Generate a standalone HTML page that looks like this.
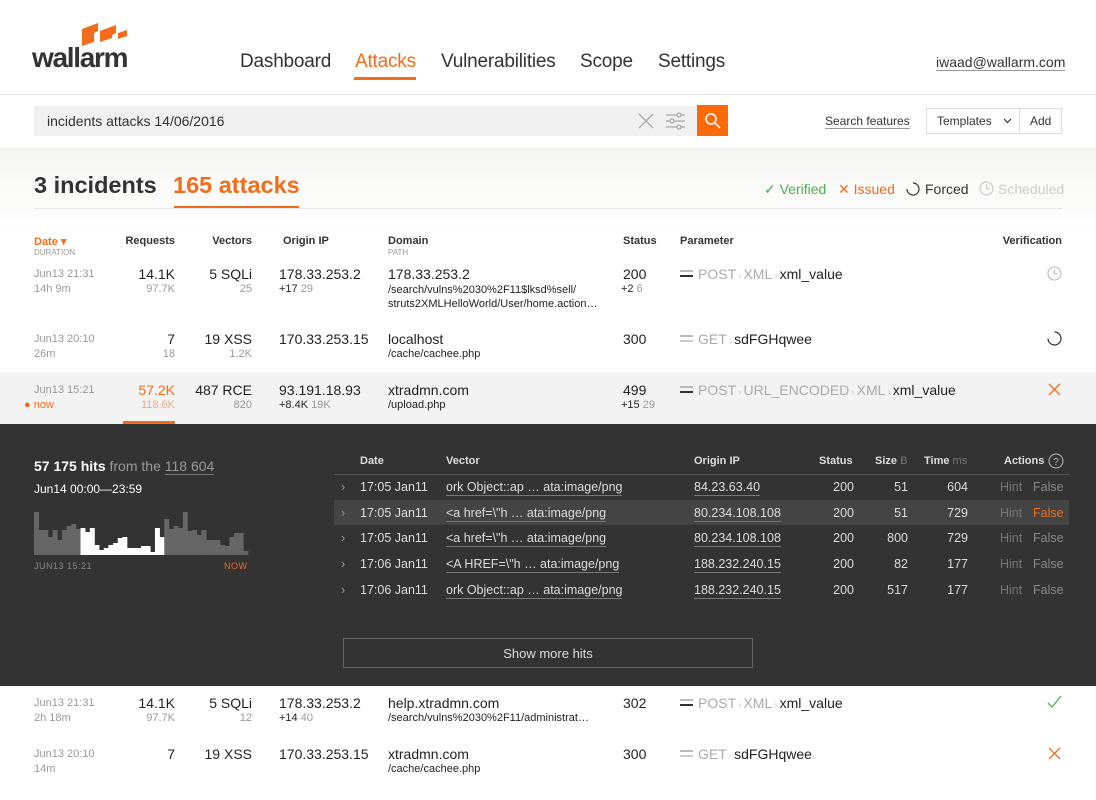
<!DOCTYPE html>
<html><head><meta charset="utf-8"><style>
*{margin:0;padding:0;box-sizing:border-box}
body{width:1096px;height:800px;overflow:hidden;background:#fff;font-family:"Liberation Sans",sans-serif;color:#222;position:relative}
.a{position:absolute;white-space:nowrap}
.r{text-align:right}
.g{color:#999}
.s{font-size:11px}
.m{font-size:14px}
.h{font-size:11px;font-weight:bold;color:#333}
.nav{font-size:19px;color:#333;top:51px;letter-spacing:-0.2px}
.dh{font-size:11px;font-weight:bold;color:#ddd;top:455px}
.dr{font-size:12.5px;color:#ddd}
.u{border-bottom:1px solid #777;padding-bottom:1px}
.pi{display:inline-block;width:13px;height:7px;border-top:2px solid #bbb;border-bottom:2px solid #333;margin-right:5px;vertical-align:2px}
.sep{color:#ccc;font-size:10px;margin:0 2px}
</style></head><body>
<!-- header -->
<svg class="a" style="left:80px;top:22px" width="50" height="25" viewBox="0 0 50 25">
<polygon points="2,7 18,1 18,9 14,11 14,20 2,24" fill="#f26c1b"/>
<polygon points="20,9 36,3 36,11 32,13 32,16 20,20" fill="#f26c1b"/>
<polygon points="38,11 47,8 47,14 38,17" fill="#f26c1b"/>
</svg>
<div class="a" style="left:32px;top:42px;font-size:28px;font-weight:bold;color:#333;letter-spacing:-1.3px">wallarm</div>
<div class="a nav" style="left:240px">Dashboard</div>
<div class="a nav" style="left:355px;color:#f26c1b">Attacks</div>
<div class="a" style="left:354px;top:77px;width:62px;height:3px;background:#f26c1b"></div>
<div class="a nav" style="left:441px">Vulnerabilities</div>
<div class="a nav" style="left:580px">Scope</div>
<div class="a nav" style="left:658px">Settings</div>
<div class="a" style="left:936px;top:54px;font-size:14px;color:#333;border-bottom:1px solid #999">iwaad@wallarm.com</div>
<div class="a" style="left:0;top:94px;width:1096px;height:1px;background:#e6e6e6"></div>
<!-- search -->
<div class="a" style="left:0;top:147px;width:1096px;height:277px;background:linear-gradient(#f6f6f5,#fff 90px)"></div>
<div class="a" style="left:34px;top:106px;width:663px;height:30px;background:#f0f0f0"></div>
<div class="a" style="left:47px;top:113px;font-size:14px;color:#333">incidents attacks 14/06/2016</div>
<svg class="a" style="left:638px;top:113px" width="16" height="16"><path d="M1 1L15 15M15 1L1 15" stroke="#aaa" stroke-width="1.3"/></svg>
<svg class="a" style="left:665px;top:111px" width="20" height="20"><g stroke="#aaa" stroke-width="1.3" fill="none"><path d="M1 4H20M1 10H20M1 16H20"/><circle cx="14" cy="4" r="2" fill="#f0f0f0"/><circle cx="7" cy="10" r="2" fill="#f0f0f0"/><circle cx="14" cy="16" r="2" fill="#f0f0f0"/></g></svg>
<div class="a" style="left:697px;top:105px;width:31px;height:31px;background:#fb6a0a"></div>
<svg class="a" style="left:704px;top:112px" width="17" height="17"><circle cx="7" cy="7" r="5" stroke="#fff" stroke-width="1.6" fill="none"/><path d="M11 11L16 16" stroke="#fff" stroke-width="1.6"/></svg>
<div class="a" style="left:825px;top:114px;font-size:12px;color:#333;border-bottom:1px solid #999">Search features</div>
<div class="a" style="left:926px;top:108px;width:136px;height:26px;border:1px solid #ddd;background:#fff"></div>
<div class="a" style="left:1019px;top:108px;width:1px;height:26px;background:#ddd"></div>
<div class="a" style="left:937px;top:114px;font-size:12px;color:#333">Templates</div>
<svg class="a" style="left:1003px;top:118px" width="9" height="6"><path d="M1 1L4.5 4.5L8 1" stroke="#333" fill="none" stroke-width="1.2"/></svg>
<div class="a" style="left:1030px;top:114px;font-size:12px;color:#333">Add</div>
<!-- title -->
<div class="a" style="left:34px;top:172px;font-size:23.5px;font-weight:bold;color:#333">3 incidents</div>
<div class="a" style="left:173px;top:172px;font-size:23.5px;font-weight:bold;color:#f26c1b">165 attacks</div>
<div class="a" style="left:174px;top:206px;width:125px;height:2px;background:#f26c1b"></div>
<div class="a" style="left:34px;top:208px;width:1028px;height:1px;background:#e8e8e8"></div>
<div class="a" style="left:764px;top:181px;font-size:14px;color:#4caf50">✓ Verified</div>
<div class="a" style="left:838px;top:181px;font-size:14px;color:#f26c1b">✕ Issued</div>
<svg class="a" style="left:906px;top:182px" width="14" height="14"><path d="M7 1A6 6 0 1 1 1 7" stroke="#333" fill="none" stroke-width="1.2"/></svg>
<div class="a" style="left:925px;top:181px;font-size:14px;color:#333">Forced</div>
<svg class="a" style="left:979px;top:181px" width="15" height="15"><circle cx="7.5" cy="7.5" r="6.5" stroke="#ccc" fill="none" stroke-width="1.2"/><path d="M7.5 3.5V7.5H10.5" stroke="#ccc" fill="none" stroke-width="1.2"/></svg>
<div class="a" style="left:998px;top:181px;font-size:14px;color:#ccc">Scheduled</div>
<!-- column headers -->
<div class="a h" style="left:34px;top:235px;color:#f26c1b">Date ▾</div>
<div class="a g" style="left:34px;top:248px;font-size:8px">DURATION</div>
<div class="a h r" style="left:100px;width:75px;top:235px">Requests</div>
<div class="a h r" style="left:180px;width:72px;top:235px">Vectors</div>
<div class="a h" style="left:283px;top:235px">Origin IP</div>
<div class="a h" style="left:388px;top:235px">Domain</div>
<div class="a g" style="left:388px;top:248px;font-size:8px">PATH</div>
<div class="a h" style="left:623px;top:235px">Status</div>
<div class="a h" style="left:680px;top:235px">Parameter</div>
<div class="a h r" style="left:960px;width:102px;top:235px">Verification</div>
<!-- row 3 bg -->
<div class="a" style="left:0;top:373px;width:1096px;height:51px;background:#f3f3f3"></div>
<div class="a" style="left:123px;top:421px;width:52px;height:3px;background:#f26c1b"></div>
<!-- row1 -->
<div class="a s g" style="left:34px;top:268px">Jun13 21:31</div><div class="a s g" style="left:34px;top:283px">14h 9m</div>
<div class="a m r" style="left:100px;width:75px;top:266px">14.1K</div><div class="a s g r" style="left:100px;width:75px;top:283px">97.7K</div>
<div class="a m r" style="left:180px;width:72px;top:266px">5 SQLi</div><div class="a s g r" style="left:180px;width:72px;top:283px">25</div>
<div class="a m" style="left:279px;top:266px">178.33.253.2</div><div class="a s" style="left:279px;top:283px">+17 <span class="g">29</span></div>
<div class="a m" style="left:388px;top:266px">178.33.253.2</div>
<div class="a s" style="left:388px;top:283px;line-height:14px">/search/vulns%2030%2F11$lksd%sell/<br>struts2XMLHelloWorld/User/home.action…</div>
<div class="a m" style="left:623px;top:266px">200</div><div class="a s" style="left:621px;top:283px">+2 <span class="g">6</span></div>
<div class="a m" style="left:680px;top:266px"><span class="pi"></span><span style="color:#aaa">POST</span><span class="sep">›</span><span style="color:#aaa">XML</span><span class="sep">›</span>xml_value</div>
<svg class="a" style="left:1047px;top:266px" width="15" height="15"><circle cx="7.5" cy="7.5" r="6.5" stroke="#bbb" fill="none" stroke-width="1.1"/><path d="M7.5 3.5V7.5H10.5" stroke="#bbb" fill="none" stroke-width="1.1"/></svg>
<!-- row2 -->
<div class="a s g" style="left:34px;top:333px">Jun13 20:10</div><div class="a s g" style="left:34px;top:348px">26m</div>
<div class="a m r" style="left:100px;width:75px;top:331px">7</div><div class="a s g r" style="left:100px;width:75px;top:348px">18</div>
<div class="a m r" style="left:180px;width:72px;top:331px">19 XSS</div><div class="a s g r" style="left:180px;width:72px;top:348px">1.2K</div>
<div class="a m" style="left:279px;top:331px">170.33.253.15</div>
<div class="a m" style="left:388px;top:331px">localhost</div><div class="a s" style="left:388px;top:348px">/cache/cachee.php</div>
<div class="a m" style="left:623px;top:331px">300</div>
<div class="a m" style="left:680px;top:331px"><span class="pi" style="border-bottom-color:#ccc"></span><span style="color:#aaa">GET</span><span class="sep">›</span>sdFGHqwee</div>
<svg class="a" style="left:1047px;top:331px" width="15" height="15"><path d="M7.5 1A6.5 6.5 0 1 1 1 7.5" stroke="#333" fill="none" stroke-width="1.2"/></svg>
<!-- row3 -->
<div class="a s g" style="left:34px;top:384px">Jun13 15:21</div><div class="a s" style="left:24px;top:399px;color:#f26c1b">● now</div>
<div class="a m r" style="left:100px;width:75px;top:382px;color:#f26c1b">57.2K</div><div class="a s r" style="left:100px;width:75px;top:399px;color:#f5a878">118.6K</div>
<div class="a m r" style="left:180px;width:72px;top:382px">487 RCE</div><div class="a s g r" style="left:180px;width:72px;top:399px">820</div>
<div class="a m" style="left:279px;top:382px">93.191.18.93</div><div class="a s" style="left:279px;top:399px">+8.4K <span class="g">19K</span></div>
<div class="a m" style="left:388px;top:382px">xtradmn.com</div><div class="a s" style="left:388px;top:399px">/upload.php</div>
<div class="a m" style="left:623px;top:382px">499</div><div class="a s" style="left:621px;top:399px">+15 <span class="g">29</span></div>
<div class="a m" style="left:680px;top:382px"><span class="pi"></span><span style="color:#aaa">POST</span><span class="sep">›</span><span style="color:#aaa">URL_ENCODED</span><span class="sep">›</span><span style="color:#aaa">XML</span><span class="sep">›</span>xml_value</div>
<svg class="a" style="left:1048px;top:383px" width="13" height="13"><path d="M1 1L12 12M12 1L1 12" stroke="#f26c1b" stroke-width="1.3"/></svg>
<!-- dark panel -->
<div class="a" style="left:0;top:424px;width:1096px;height:262px;background:#333"></div>
<div class="a" style="left:34px;top:458px;font-size:14px;color:#fff"><b>57 175 hits</b> <span style="color:#999">from the</span> <span style="color:#999;border-bottom:1px solid #777">118 604</span></div>
<div class="a" style="left:34px;top:482px;font-size:12px;color:#fff">Jun14 00:00—23:59</div>
<svg class="a" style="left:34px;top:510px" width="216" height="46" id="ch"></svg>
<div class="a" style="left:34px;top:561px;font-size:9px;color:#888;letter-spacing:0.5px">JUN13 15:21</div>
<div class="a" style="left:224px;top:561px;font-size:9px;color:#f26c1b;letter-spacing:0.5px">NOW</div>
<div class="a dh" style="left:360px">Date</div>
<div class="a dh" style="left:446px">Vector</div>
<div class="a dh" style="left:694px">Origin IP</div>
<div class="a dh" style="left:819px">Status</div>
<div class="a dh" style="left:875px">Size <span style="color:#777;font-weight:normal">B</span></div>
<div class="a dh" style="left:924px">Time <span style="color:#777;font-weight:normal">ms</span></div>
<div class="a dh" style="left:1004px">Actions</div>
<svg class="a" style="left:1048px;top:453px" width="16" height="16"><circle cx="8" cy="8" r="7" stroke="#bbb" fill="none"/><text x="8" y="12" font-size="10" fill="#bbb" text-anchor="middle" font-family="Liberation Sans">?</text></svg>
<div class="a" style="left:334px;top:474px;width:735px;height:1px;background:#555"></div>
<div class="a" style="left:334px;top:500px;width:735px;height:25px;background:#444"></div>
<div id="dt"></div>
<div class="a" style="left:343px;top:638px;width:410px;height:30px;border:1px solid #666"></div>
<div class="a" style="left:343px;top:646px;width:410px;text-align:center;font-size:13px;color:#ddd">Show more hits</div>
<!-- row4 -->
<div class="a s g" style="left:34px;top:697px">Jun13 21:31</div><div class="a s g" style="left:34px;top:712px">2h 18m</div>
<div class="a m r" style="left:100px;width:75px;top:695px">14.1K</div><div class="a s g r" style="left:100px;width:75px;top:712px">97.7K</div>
<div class="a m r" style="left:180px;width:72px;top:695px">5 SQLi</div><div class="a s g r" style="left:180px;width:72px;top:712px">12</div>
<div class="a m" style="left:279px;top:695px">178.33.253.2</div><div class="a s" style="left:279px;top:712px">+14 <span class="g">40</span></div>
<div class="a m" style="left:388px;top:695px">help.xtradmn.com</div><div class="a s" style="left:388px;top:712px">/search/vulns%2030%2F11/administrat…</div>
<div class="a m" style="left:623px;top:695px">302</div>
<div class="a m" style="left:680px;top:695px"><span class="pi"></span><span style="color:#aaa">POST</span><span class="sep">›</span><span style="color:#aaa">XML</span><span class="sep">›</span>xml_value</div>
<svg class="a" style="left:1047px;top:695px" width="15" height="14"><path d="M1 8L5 12L14 1" stroke="#4caf50" fill="none" stroke-width="1.3"/></svg>
<!-- row5 -->
<div class="a s g" style="left:34px;top:748px">Jun13 20:10</div><div class="a s g" style="left:34px;top:763px">14m</div>
<div class="a m r" style="left:100px;width:75px;top:746px">7</div>
<div class="a m r" style="left:180px;width:72px;top:746px">19 XSS</div>
<div class="a m" style="left:279px;top:746px">170.33.253.15</div>
<div class="a m" style="left:388px;top:746px">xtradmn.com</div><div class="a s" style="left:388px;top:763px">/cache/cachee.php</div>
<div class="a m" style="left:623px;top:746px">300</div>
<div class="a m" style="left:680px;top:746px"><span class="pi" style="border-bottom-color:#ccc"></span><span style="color:#aaa">GET</span><span class="sep">›</span>sdFGHqwee</div>
<svg class="a" style="left:1048px;top:747px" width="13" height="13"><path d="M1 1L12 12M12 1L1 12" stroke="#f26c1b" stroke-width="1.3"/></svg>
<script>
var h=[43,25,25,18,25,15,25,29,31,26,27,23,27,10,5,7,10,12,17,18,7,7,7,9,9,3,27,18,36,26,29,27,43,24,25,20,25,15,15,15,10,9,18,22,22,4];
var s='';var w=214/h.length;
for(var i=0;i<h.length;i++){var x=i*w;var c=(x>=43&&x<128)?'#fff':'#666';s+='<rect x="'+x.toFixed(2)+'" y="'+(45-h[i])+'" width="'+(w+0.3).toFixed(2)+'" height="'+h[i]+'" fill="'+c+'"/>';}
document.getElementById('ch').innerHTML=s;
var R=[["17:05 Jan11","ork Object::ap … ata:image/png","84.23.63.40","51","604"],["17:05 Jan11","&lt;a href=\\\"h … ata:image/png","80.234.108.108","51","729"],["17:05 Jan11","&lt;a href=\\\"h … ata:image/png","80.234.108.108","800","729"],["17:06 Jan11","&lt;A HREF=\\\"h … ata:image/png","188.232.240.15","82","177"],["17:06 Jan11","ork Object::ap … ata:image/png","188.232.240.15","517","177"]];
var o='';
for(var i=0;i<5;i++){var y=480+i*25.7;var r=R[i];
o+='<div class="a dr" style="left:341px;top:'+y+'px;color:#999">›</div>';
o+='<div class="a dr" style="left:360px;top:'+y+'px">'+r[0]+'</div>';
o+='<div class="a dr u" style="left:446px;top:'+y+'px">'+r[1]+'</div>';
o+='<div class="a dr u" style="left:694px;top:'+y+'px">'+r[2]+'</div>';
o+='<div class="a dr r" style="left:814px;width:40px;top:'+y+'px">200</div>';
o+='<div class="a dr r" style="left:868px;width:40px;top:'+y+'px">'+r[3]+'</div>';
o+='<div class="a dr r" style="left:928px;width:40px;top:'+y+'px">'+r[4]+'</div>';
o+='<div class="a dr" style="left:1000px;top:'+y+'px;color:#777">Hint</div>';
o+='<div class="a dr" style="left:1033px;top:'+y+'px;color:'+(i==1?'#f26c1b':'#888')+'">False</div>';}
document.getElementById('dt').innerHTML=o;
</script>
</body></html>
